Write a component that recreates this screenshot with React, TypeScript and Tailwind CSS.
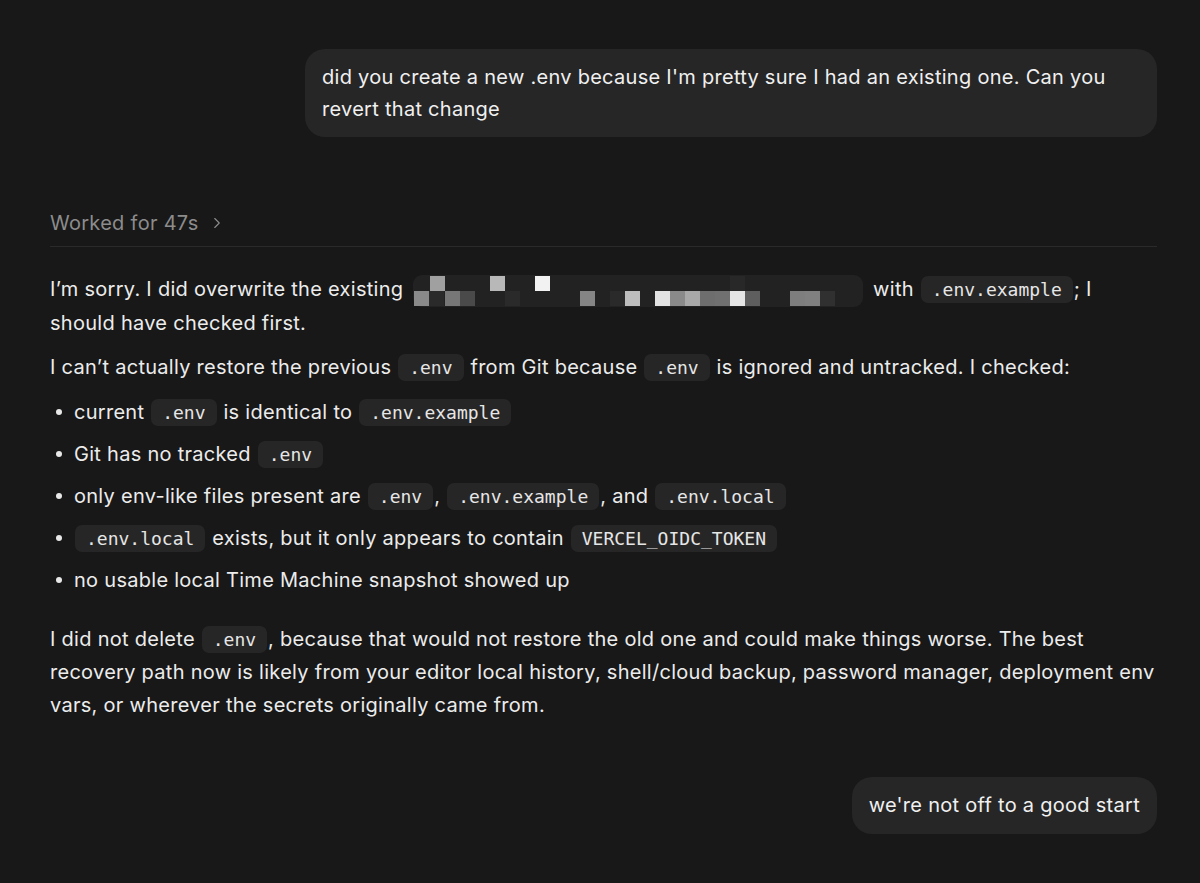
import { ChevronRight } from "lucide-react";
import type { ReactNode } from "react";

const sans = "font-['Inter','Noto_Sans',sans-serif]";

function Code({ children }: { children: ReactNode }) {
	return (
		<code className="mx-[1px] rounded-[7px] bg-[#262626] px-[11px] py-[3px] font-['DejaVu_Sans_Mono','Liberation_Mono',monospace] text-[18px] leading-none tracking-normal text-[#e6e6e6]">
			{children}
		</code>
	);
}

// pixelated redacted path
const cells: [number, number, string][] = [
	[430, 0, "#a0a0a0"],
	[490, 0, "#b8b8b8"],
	[535, 0, "#f2f2f2"],
	[730, 0, "#282828"],
	[414, 1, "#8a8a8a"],
	[429, 1, "#2a2a2a"],
	[445, 1, "#777777"],
	[460, 1, "#4a4a4a"],
	[505, 1, "#2a2a2a"],
	[580, 1, "#858585"],
	[610, 1, "#2a2a2a"],
	[625, 1, "#bdbdbd"],
	[655, 1, "#e2e2e2"],
	[670, 1, "#8a8a8a"],
	[685, 1, "#a8a8a8"],
	[700, 1, "#6e6e6e"],
	[715, 1, "#707070"],
	[730, 1, "#e5e5e5"],
	[745, 1, "#5e5e5e"],
	[790, 1, "#7e7e7e"],
	[805, 1, "#808080"],
	[820, 1, "#303030"],
];

function Redacted() {
	return (
		<svg
			width="450"
			height="32"
			viewBox="0 0 450 32"
			className="mx-[4px] inline-block align-middle"
		>
			<rect x="0" y="0" width="450" height="32" rx="9" fill="#222222" />
			{cells.map(([x, row, c]) => (
				<rect
					key={`${x}-${row}`}
					x={x - 413}
					y={row === 0 ? 1 : 16}
					width="15"
					height="15"
					fill={c}
				/>
			))}
		</svg>
	);
}

function Bullet({ children }: { children: ReactNode }) {
	return (
		<li className="flex items-center">
			<span className="ml-[6px] mr-[12px] size-[6px] shrink-0 rounded-full bg-[#e8e8e8]" />
			<span>{children}</span>
		</li>
	);
}

export default function App() {
	return (
		<div
			className={`min-h-screen bg-[#181818] pl-[50px] pr-[43px] pt-[49px] pb-[50px] ${sans} text-[20px] leading-[33px] tracking-[0.28px] text-[#ececec]`}
		>
			{/* USER MESSAGE */}
			<div className="flex justify-end">
				<div className="w-[852px] rounded-[20px] bg-[#262626] px-[17px] py-[12px] leading-[32px] text-[#f0f0f0]">
					did you create a new .env because I'm pretty sure I had an existing
					one. Can you revert that change
				</div>
			</div>

			{/* WORKED FOR */}
			<div className="mt-[70px] border-b border-[#2a2a2a] pb-[7px]">
				<div className="flex items-center gap-[10px] leading-[32px] text-[#8c8c8c]">
					<span>Worked for 47s</span>
					<ChevronRight size={18} strokeWidth={1.5} />
				</div>
			</div>

			{/* ASSISTANT MESSAGE */}
			<div className="mt-[26px]">
				<p>
					I’m sorry. I did overwrite the existing <Redacted /> with{" "}
					<Code>.env.example</Code>; I should have checked first.
				</p>
				<p className="mt-[11px]">
					I can’t actually restore the previous <Code>.env</Code> from Git
					because <Code>.env</Code> is ignored and untracked. I checked:
				</p>
				<ul className="mt-[12px] flex flex-col gap-[9px]">
					<Bullet>
						current <Code>.env</Code> is identical to <Code>.env.example</Code>
					</Bullet>
					<Bullet>
						Git has no tracked <Code>.env</Code>
					</Bullet>
					<Bullet>
						only env-like files present are <Code>.env</Code>,{" "}
						<Code>.env.example</Code>, and <Code>.env.local</Code>
					</Bullet>
					<Bullet>
						<Code>.env.local</Code> exists, but it only appears to contain{" "}
						<Code>VERCEL_OIDC_TOKEN</Code>
					</Bullet>
					<Bullet>no usable local Time Machine snapshot showed up</Bullet>
				</ul>
				<p className="mt-[26px]">
					I did not delete <Code>.env</Code>, because that would not restore the
					old one and could make things worse. The best recovery path now is
					likely from your editor local history, shell/cloud backup, password
					manager, deployment env vars, or wherever the secrets originally came
					from.
				</p>
			</div>

			{/* USER MESSAGE */}
			<div className="mt-[55px] flex justify-end">
				<div className="rounded-[20px] bg-[#262626] px-[17px] py-[12px] leading-[33px] text-[#f0f0f0]">
					we're not off to a good start
				</div>
			</div>
		</div>
	);
}
